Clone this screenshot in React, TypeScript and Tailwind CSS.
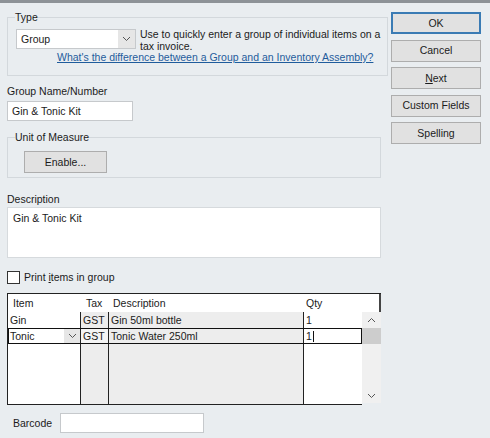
import React from "react";

const Chevron = ({ up = false }: { up?: boolean }) => (
  <svg width="9" height="6" viewBox="0 0 9 6" className="block">
    <polyline
      points={up ? "1,5 4.5,1.5 8,5" : "1,1 4.5,4.5 8,1"}
      fill="none"
      stroke="#555"
      strokeWidth="1"
    />
  </svg>
);

const Btn = ({ children, primary = false }: { children: React.ReactNode; primary?: boolean }) => (
  <div
    className={
      "h-[22px] w-[90px] flex items-center justify-center bg-[#e1e1e1] border " +
      (primary ? "border-[#3a7bb4] shadow-[inset_0_0_0_1px_#3a7bb4]" : "border-[#adadad]")
    }>
    {children}
  </div>
);

export default function App() {
  return (
    <div className="w-[490px] h-[438px] overflow-hidden bg-[#e9edf0] text-[10.5px] leading-[13px] text-[#1b1b1b] font-['Liberation_Sans',Arial,sans-serif]">
      <div className="h-[3px] bg-[#8d9297]" />
      <div className="flex pl-[7px]">
        {/* Left column */}
        <div className="w-[374px] flex flex-col">
          {/* Type */}
          <fieldset className="mt-[8px] h-[65px] border border-[#d3d8dc] px-[7px]">
            <legend className="px-0 leading-[13px]">Type</legend>
            <div className="mt-[5px] flex">
              <div className="ml-[1px] flex h-[20px] w-[120px] shrink-0 border border-[#c6c9cc] bg-white">
                <span className="flex-1 pl-[4px] leading-[18px]">Group</span>
                <span className="flex w-[17px] items-center justify-center bg-[#e6e6e6]">
                  <Chevron />
                </span>
              </div>
              <div className="ml-[4px] -mt-[1px] whitespace-nowrap leading-[12px]">
                Use to quickly enter a group of individual items on a
                <br />
                tax invoice.
              </div>
            </div>
            <div className="ml-[42px] -mt-[1px] whitespace-nowrap leading-[12px] text-[#1f5c9c] underline">
              What's the difference between a Group and an Inventory Assembly?
            </div>
          </fieldset>

          {/* Group name */}
          <div className="mt-[9px]">Group Name/Number</div>
          <div className="mt-[3px] h-[20px] w-[126px] border border-[#c6c9cc] bg-white pl-[4px] leading-[18px]">
            Gin &amp; Tonic Kit
          </div>

          {/* Unit of measure */}
          <fieldset className="mt-[10px] h-[47px] border border-[#d3d8dc] px-[7px]">
            <legend className="px-0 leading-[13px]">Unit of Measure</legend>
            <div className="ml-[9px] mt-[7px] flex h-[22px] w-[83px] items-center justify-center border border-[#adadad] bg-[#e1e1e1]">
              Enable...
            </div>
          </fieldset>

          {/* Description */}
          <div className="mt-[15px]">Description</div>
          <div className="mt-[1px] h-[51px] border border-[#d6dadd] bg-white pl-[5px] pt-[4px]">
            Gin &amp; Tonic Kit
          </div>

          {/* Checkbox */}
          <div className="mt-[13px] flex items-center">
            <div className="h-[13px] w-[13px] border border-[#333] bg-white" />
            <span className="ml-[4px]">
              Print <span className="underline">i</span>tems in group
            </span>
          </div>

          {/* Items table */}
          <div className="mt-[9px] flex flex-col">
            <div className="flex h-[19px] items-center border-t border-l border-[#222] bg-white">
              <span className="w-[73px] pl-[5px]">Item</span>
              <span className="w-[28px] pl-[5px]">Tax</span>
              <span className="w-[195px] pl-[4px]">Description</span>
              <span className="flex-1 self-stretch pl-[2px] leading-[19px] border-r-2 border-[#444]">Qty</span>
            </div>
            <div className="flex">
              <div className="flex w-[355px] flex-col border-l border-b border-[#222]">
                <div className="flex h-[16px] leading-[16px]">
                  <span className="w-[73px] border-r border-[#222] bg-white pl-[2px]">Gin</span>
                  <span className="w-[28px] border-r border-[#222] bg-[#ededed] pl-[2px]">GST</span>
                  <span className="w-[195px] border-r border-[#222] bg-[#ededed] pl-[2px]">Gin 50ml bottle</span>
                  <span className="flex-1 bg-white pl-[2px]">1</span>
                </div>
                <div className="flex h-[16px] leading-[16px] outline outline-1 -outline-offset-1 outline-[#111]">
                  <span className="flex w-[73px] border-r border-[#222] bg-white pl-[2px]">
                    <span className="flex-1">Tonic</span>
                    <span className="my-[1px] flex w-[16px] items-center justify-center bg-[#e6e6e6]">
                      <Chevron />
                    </span>
                  </span>
                  <span className="w-[28px] border-r border-[#222] bg-[#f4f4f4] pl-[2px]">GST</span>
                  <span className="w-[195px] border-r border-[#222] bg-[#ededed] pl-[2px]">Tonic Water 250ml</span>
                  <span className="flex flex-1 items-center bg-white pl-[2px]">
                    1<span className="ml-[1px] h-[11px] w-[1px] bg-[#111]" />
                  </span>
                </div>
                <div className="flex h-[60px]">
                  <span className="w-[73px] border-r border-[#222] bg-white" />
                  <span className="w-[28px] border-r border-[#222] bg-[#ededed]" />
                  <span className="w-[195px] border-r border-[#222] bg-[#ededed]" />
                  <span className="flex-1 bg-white" />
                </div>
              </div>
              <div className="flex h-[91px] w-[19px] flex-col items-center bg-[#f0f0f0]">
                <div className="flex h-[16px] items-center">
                  <Chevron up />
                </div>
                <div className="h-[16px] w-full bg-[#cdcdcd]" />
                <div className="flex-1" />
                <div className="flex h-[14px] items-center">
                  <Chevron />
                </div>
              </div>
            </div>
          </div>

          {/* Barcode */}
          <div className="mt-[8px] flex items-center">
            <span className="ml-[6px] w-[47px]">Barcode</span>
            <div className="h-[20px] w-[144px] border border-[#c6c9cc] bg-white" />
          </div>
        </div>

        {/* Buttons */}
        <div className="ml-[10px] mt-[9px] flex flex-col gap-[5.5px]">
          <Btn primary>OK</Btn>
          <Btn>Cancel</Btn>
          <Btn>
            <span>
              <span className="underline">N</span>ext
            </span>
          </Btn>
          <Btn>Custom Fields</Btn>
          <Btn>Spelling</Btn>
        </div>
      </div>
    </div>
  );
}
